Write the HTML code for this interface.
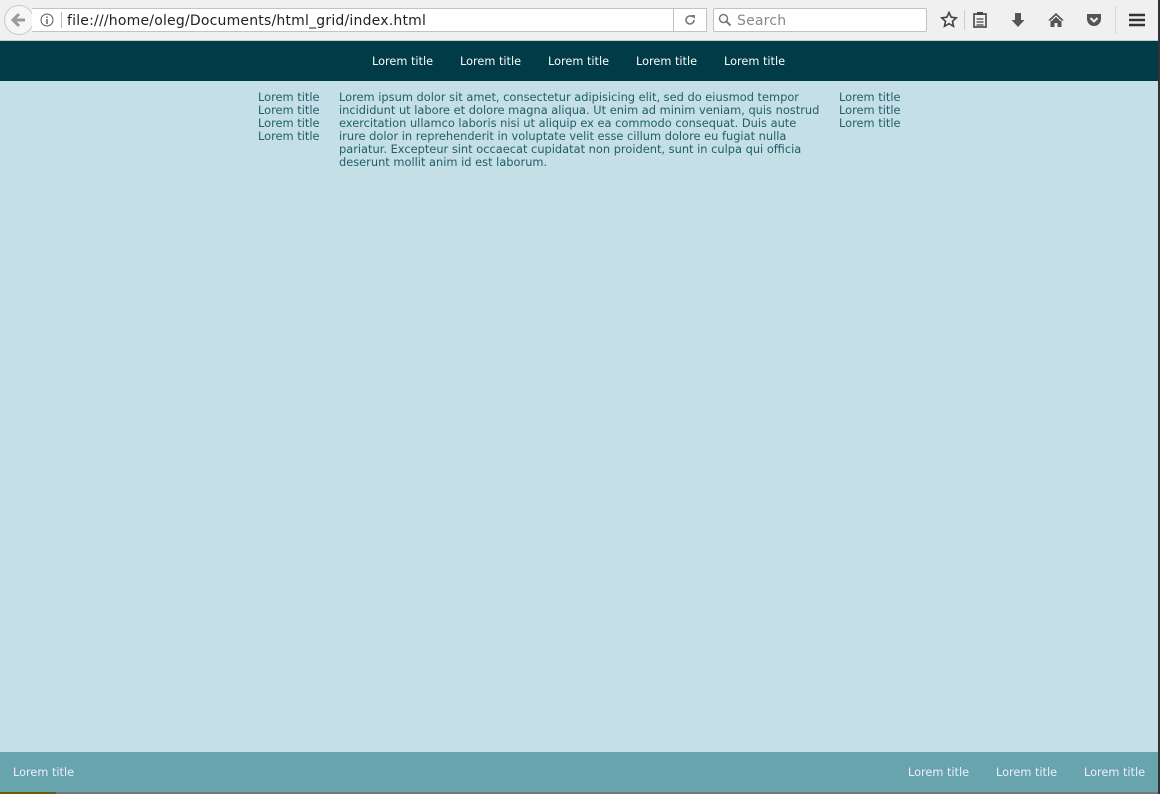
<!DOCTYPE html>
<html><head><meta charset="utf-8"><style>
*{margin:0;padding:0;box-sizing:border-box}
body{width:1160px;height:794px;overflow:hidden;background:#c4dfe5;font-family:"DejaVu Sans",sans-serif;position:relative}
.chrome{position:absolute;left:0;top:0;width:1160px;height:41px;background:#f0f0f0;border-bottom:1px solid #c8c8c8}
.back{position:absolute;left:4px;top:5px;width:30px;height:30px;border-radius:50%;border:1px solid #c9c9c9;background:#f6f6f6}
.url{position:absolute;left:32px;top:8px;width:642px;height:24px;border:1px solid #c2c2c2;border-left:none;background:#fff;font:14px "DejaVu Sans",sans-serif;color:#222;padding:4px 0 0 35px;letter-spacing:0.2px}
.rel{position:absolute;left:673px;top:8px;width:34px;height:24px;border:1px solid #c2c2c2;background:#fff}
.search{position:absolute;left:713px;top:8px;width:214px;height:24px;border:1px solid #c2c2c2;background:#fff;border-radius:2px;font:14px "DejaVu Sans",sans-serif;color:#888;padding:4px 0 0 23px;letter-spacing:0.2px}
.nav{position:absolute;left:0;top:41px;width:1160px;height:40px;background:#003b47}
.nav span{position:absolute;top:14px;font-size:11.3px;color:#fff}
.col{position:absolute;top:91px;font-size:11.4px;line-height:13px;color:#1f5f69;white-space:nowrap}
.foot{position:absolute;left:0;top:752px;width:1160px;height:40px;background:#67a4ad}
.foot span{position:absolute;top:14px;font-size:11.3px;color:#eef}
.bot{position:absolute;left:0;top:792px;width:1160px;height:2px;background:#777}
.edge{position:absolute;left:1158px;top:0;width:2px;height:794px;background:#333}
svg{position:absolute}
</style></head><body>
<div class="chrome">
<div class="back"></div>
<svg style="left:10px;top:12px" width="18" height="16" viewBox="0 0 18 16"><path d="M9 2L3 8l6 6M3 8h12" stroke="#9a9a9a" stroke-width="3" fill="none"/></svg>
<div class="url">file:///home/oleg/Documents/html_grid/index.html</div>
<svg style="left:40px;top:13px" width="14" height="14" viewBox="0 0 14 14"><circle cx="7" cy="7" r="6" stroke="#555" fill="none"/><path d="M7 6v5M7 3.5v1.5" stroke="#555" stroke-width="1.4"/></svg>
<div style="position:absolute;left:61px;top:12px;width:1px;height:16px;background:#bbb"></div>
<div class="rel"></div>
<svg style="left:683px;top:13px" width="14" height="14" viewBox="0 0 14 14"><path d="M11 7a4 4 0 1 1-1.2-2.9" stroke="#777" stroke-width="1.6" fill="none"/><path d="M8 2h4v4z" fill="#777"/></svg>
<div class="search">Search</div>
<svg style="left:718px;top:13px" width="14" height="14" viewBox="0 0 14 14"><circle cx="5.5" cy="5.5" r="4" stroke="#777" stroke-width="1.5" fill="none"/><path d="M8.5 8.5l4 4" stroke="#777" stroke-width="2"/></svg>
<svg style="left:940px;top:11px" width="18" height="18" viewBox="0 0 18 18"><path d="M9 1.5l2.2 4.7 5.1.6-3.8 3.5 1 5-4.5-2.6-4.5 2.6 1-5L1.7 6.8l5.1-.6z" stroke="#444" stroke-width="1.6" fill="none"/></svg>
<div style="position:absolute;left:964px;top:10px;width:1px;height:20px;background:#ccc"></div>
<svg style="left:972px;top:11px" width="16" height="18" viewBox="0 0 16 18"><rect x="2" y="3" width="12" height="13" stroke="#444" stroke-width="1.6" fill="none"/><rect x="5" y="1" width="6" height="3" fill="#444"/><path d="M4.5 8h7M4.5 11h7M4.5 14h7" stroke="#444" stroke-width="1.3"/></svg>
<svg style="left:1010px;top:11px" width="16" height="18" viewBox="0 0 16 18"><path d="M5 2h6v7h3.5L8 16 1.5 9H5z" fill="#555"/></svg>
<svg style="left:1047px;top:11px" width="18" height="18" viewBox="0 0 18 18"><path d="M9 2L1 9.5h2.5V16h4v-4h3v4h4V9.5H17z" fill="#555"/><path d="M9 5l-5 5M9 5l5 5" stroke="#fff" stroke-width="1"/></svg>
<svg style="left:1085px;top:11px" width="18" height="18" viewBox="0 0 18 18"><path d="M2 3h14v5a7 7 0 0 1-14 0z" fill="#555"/><path d="M5.5 7l3.5 3.5L12.5 7" stroke="#f0f0f0" stroke-width="2" fill="none"/></svg>
<div style="position:absolute;left:1115px;top:6px;width:1px;height:28px;background:#d8d8d8"></div>
<svg style="left:1128px;top:12px" width="18" height="16" viewBox="0 0 18 16"><path d="M1 3h16M1 8h16M1 13h16" stroke="#333" stroke-width="2.4"/></svg>
</div>
<div class="nav"><span style="left:372px">Lorem title</span><span style="left:460px">Lorem title</span><span style="left:548px">Lorem title</span><span style="left:636px">Lorem title</span><span style="left:724px">Lorem title</span></div>
<div class="col" style="left:258px">Lorem title<br>Lorem title<br>Lorem title<br>Lorem title</div>
<div class="col" style="left:339px;width:486px">Lorem ipsum dolor sit amet, consectetur adipisicing elit, sed do eiusmod tempor<br>incididunt ut labore et dolore magna aliqua. Ut enim ad minim veniam, quis nostrud<br>exercitation ullamco laboris nisi ut aliquip ex ea commodo consequat. Duis aute<br>irure dolor in reprehenderit in voluptate velit esse cillum dolore eu fugiat nulla<br>pariatur. Excepteur sint occaecat cupidatat non proident, sunt in culpa qui officia<br>deserunt mollit anim id est laborum.</div>
<div class="col" style="left:839px">Lorem title<br>Lorem title<br>Lorem title</div>
<div class="foot"><span style="left:13px">Lorem title</span><span style="left:908px">Lorem title</span><span style="left:996px">Lorem title</span><span style="left:1084px">Lorem title</span></div>
<div class="bot"><div style="width:56px;height:2px;background:#6a5a10"></div></div>
<div class="edge"></div>
</body></html>
